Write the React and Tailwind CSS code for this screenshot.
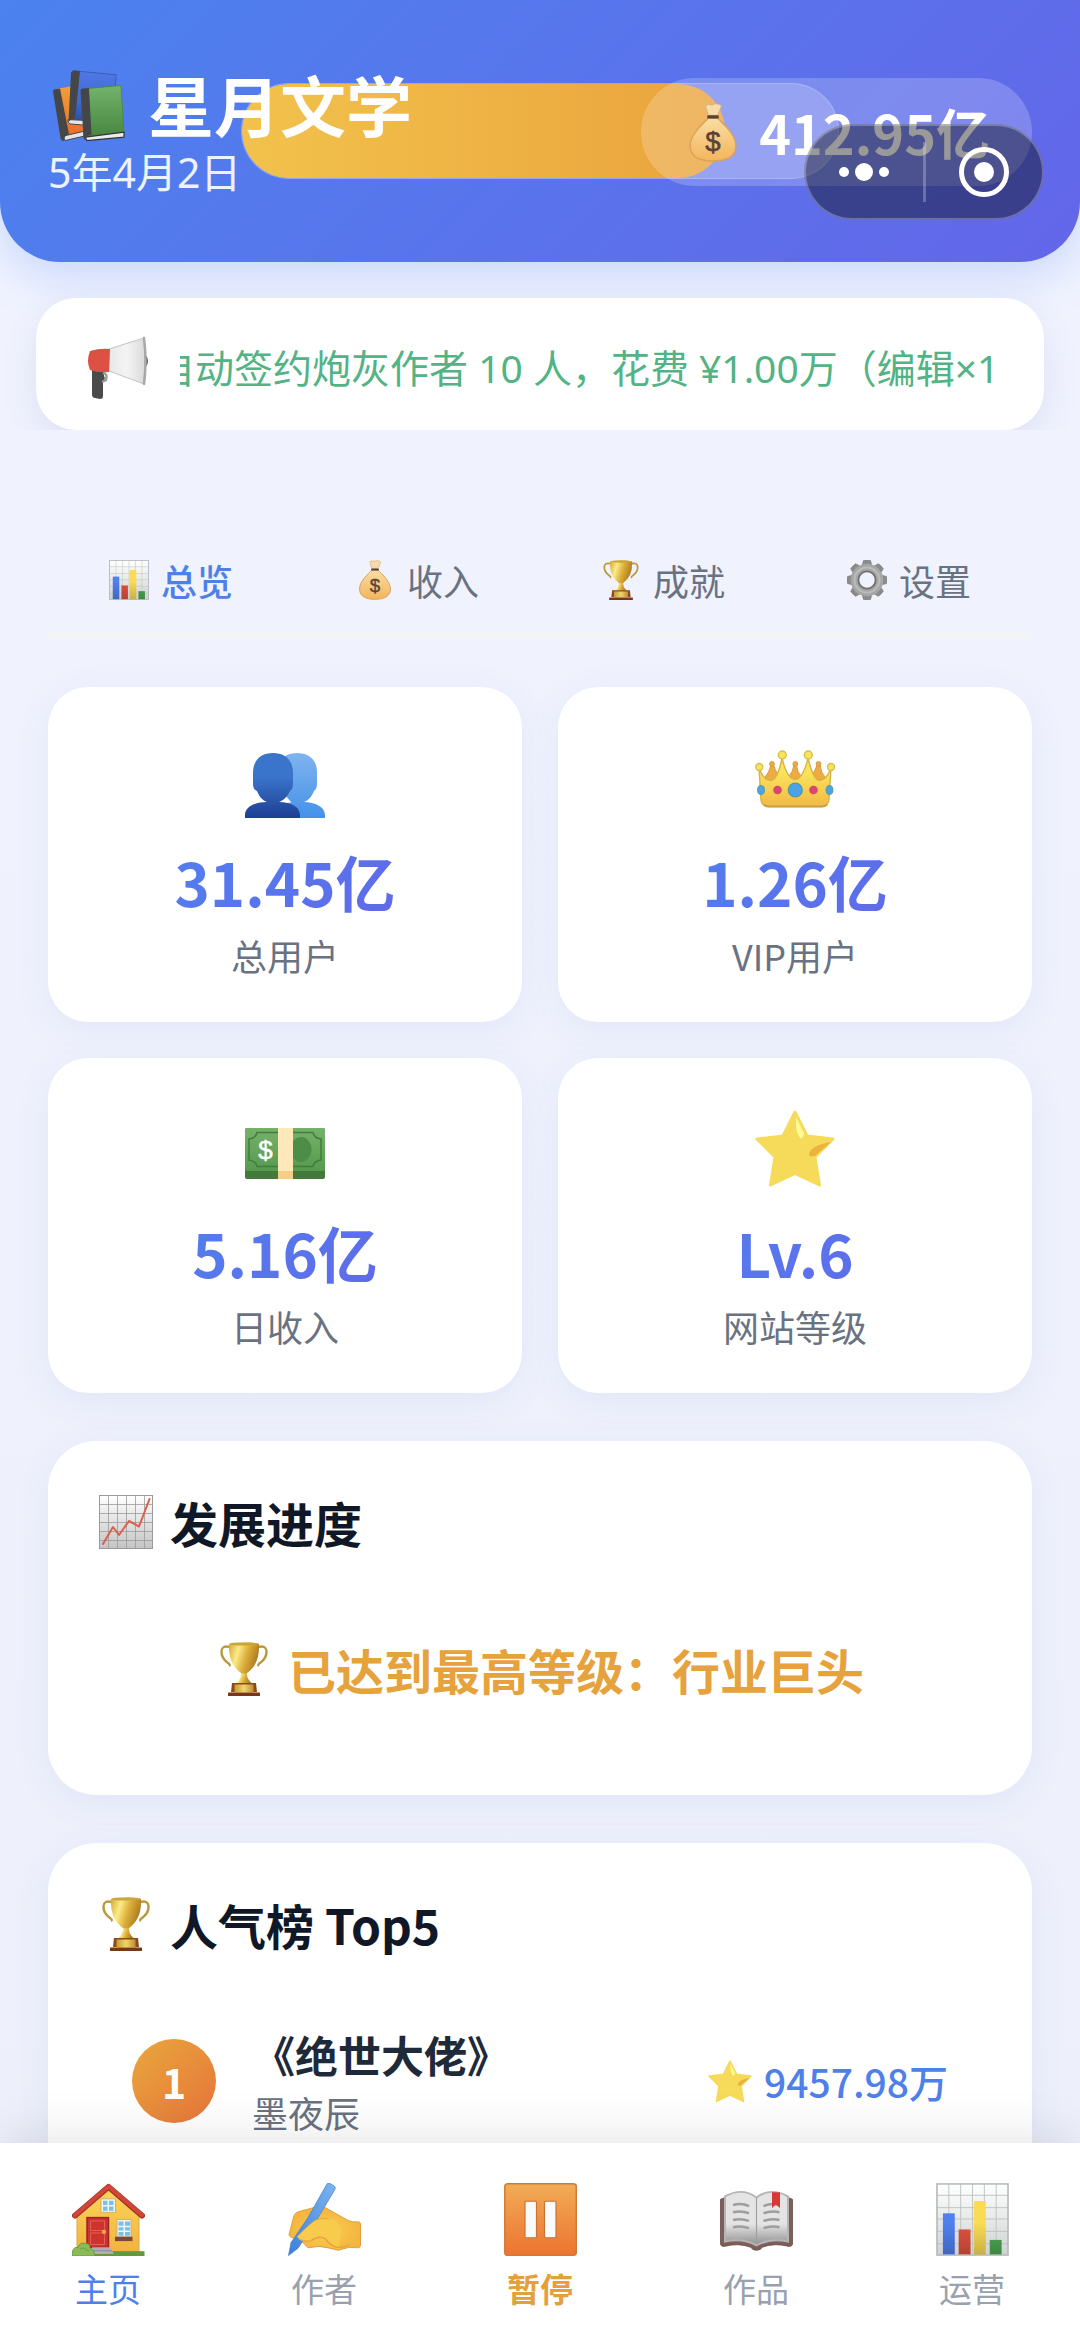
// ============================================
// 星月文学 — Home / Overview Page
// ============================================

import React, { useState } from 'react';

/* ---------- Icons ---------- */

const BooksIcon = ({ className }) => (
  <svg viewBox="0 -3 80 80" preserveAspectRatio="none" className={className} aria-hidden="true">
    <defs>
      <linearGradient id="bk-green" x1="0" y1="0" x2="0" y2="1"><stop offset="0" stopColor="#74b36c" /><stop offset="1" stopColor="#47873f" /></linearGradient>
      <linearGradient id="bk-orange" x1="0" y1="0" x2="0" y2="1"><stop offset="0" stopColor="#f0a03a" /><stop offset="1" stopColor="#ea6c28" /></linearGradient>
      <linearGradient id="bk-navy" x1="0" y1="0" x2="0" y2="1"><stop offset="0" stopColor="#4f78ea" /><stop offset="0.600" stopColor="#4068c8" /><stop offset="1" stopColor="#264f9e" /></linearGradient>
    </defs>
    <path d="M7 23 L27 19 L36 68 L17 72 Z" fill="url(#bk-orange)" />
    <path d="M15 71 L36 66 L36 71 L17 75.500 Z" fill="#e4e4e4" stroke="#444" strokeWidth="1" />
    <path d="M5 25 Q5 23 7 23 L12 22 L21 69 Q16 70 16 76 Q13 76 12.500 73 Z" fill="#444648" />
    <path d="M31 4.500 L68 8 L66 58 L26 56 Z" fill="url(#bk-navy)" stroke="#3f5cae" strokeWidth="1" />
    <path d="M20 54 L40 55 L40 60 L22 58.500 Q19.500 57 20 54 Z" fill="#e6e6e6" stroke="#444" strokeWidth="1" />
    <path d="M23 6 Q24 3.500 27 3.500 L32 4.500 L27 54 Q22 53 20.500 57 Z" fill="#444648" />
    <path d="M40 22 L73 19 L76 67 L43 71 Z" fill="url(#bk-green)" stroke="#4a8a44" strokeWidth="1" />
    <path d="M37 72 L76 67 L76 72 L39 75.500 Z" fill="#ececec" stroke="#333" strokeWidth="1.200" />
    <path d="M32.500 24 Q33 22 35 22 L41 21.500 L43.500 70 Q38 70 37.500 75 Q36 75 35.500 72 Z" fill="#444648" />
  </svg>
);

const MoneyBagIcon = ({ className }) => (
  <svg viewBox="0 0 50 62" className={className} aria-hidden="true">
    <defs>
      <linearGradient id="mb-body" x1="0" y1="0" x2="0" y2="1"><stop offset="0" stopColor="#f9dda2" /><stop offset="1" stopColor="#f3b55c" /></linearGradient>
    </defs>
    <path d="M17 3 Q20 0 24 2 Q29 -1 34 3 L30 13 L20 13 Z" fill="#f8dca8" stroke="#d5b07c" strokeWidth="1" />
    <path d="M20 16 L30 16 C36 22 49 33 49 45 C49 57 38 61 25 61 C12 61 1 57 1 45 C1 33 14 22 20 16 Z" fill="url(#mb-body)" stroke="#dba35a" strokeWidth="1.500" />
    <rect x="19" y="13" width="12" height="3.400" rx="1" fill="#5b4238" />
    <text x="25" y="50" textAnchor="middle" className="font-['Liberation_Sans',sans-serif] text-[29px]" fill="#5b4238" stroke="#5b4238" strokeWidth="0.600">$</text>
  </svg>
);

const MegaphoneIcon = ({ className }) => (
  <svg viewBox="0 0 64 64" className={className} aria-hidden="true">
    <defs>
      <linearGradient id="mp-bell" x1="0" y1="0" x2="1" y2="0"><stop offset="0" stopColor="#e8e8e8" /><stop offset="0.500" stopColor="#f4f4f4" /><stop offset="1" stopColor="#dadada" /></linearGradient>
    </defs>
    <path d="M8 33 L20 34 L20 40 Q22 43 19 46 L19 60 Q19 63 16 63 L11 62 Q8 62 8 58 Z" fill="#4a4a4a" />
    <path d="M19 37 Q24 38 22 44 L18 46" fill="none" stroke="#9b9b9b" strokeWidth="2.500" />
    <path d="M58 18 Q64 19 64 25 Q64 31 58 32 Z" fill="#5b5b5b" />
    <path d="M25 13 L60 2 Q62 25 60 48 L25 35 Z" fill="url(#mp-bell)" stroke="#c4c4c4" strokeWidth="1" />
    <path d="M60 2 Q63 25 60 48" fill="none" stroke="#a8a8a8" strokeWidth="2.500" strokeLinecap="round" />
    <path d="M6 15 Q16 12 26 13 L25 36 Q14 37 6 34 Q2 25 6 15 Z" fill="#dd5145" />
  </svg>
);

const BarChartIcon = ({ className }) => (
  <svg viewBox="0 0 74 77" preserveAspectRatio="none" className={className} aria-hidden="true">
    <defs>
      <linearGradient id="bc-bg" x1="0" y1="0" x2="0" y2="1"><stop offset="0" stopColor="#ffffff" /><stop offset="1" stopColor="#cfd2d2" /></linearGradient>
      <linearGradient id="bc-shade" x1="0" y1="0" x2="0" y2="1"><stop offset="0.400" stopColor="#000" stopOpacity="0" /><stop offset="1" stopColor="#000" stopOpacity="0.200" /></linearGradient>
    </defs>
    <rect x="1" y="1" width="72" height="75" fill="url(#bc-bg)" />
    <path d="M13 1V76M25 1V76M37 1V76M49 1V76M61 1V76M1 13H73M1 26H73M1 38H73M1 51H73M1 64H73" stroke="#bfc3c4" strokeWidth="1" />
    <rect x="7" y="32" width="12" height="44" fill="#4f80f0" />
    <rect x="23" y="49" width="12" height="27" fill="#e0533e" />
    <rect x="38.500" y="19" width="12" height="57" fill="#fadb55" />
    <rect x="54.500" y="60" width="12" height="16" fill="#4ea955" />
    <path d="M7 32h12v44H7zM23 49h12v27H23zM38.500 19h12v57h-12zM54.500 60h12v16h-12z" fill="url(#bc-shade)" />
    <rect x="1" y="1" width="72" height="75" fill="none" stroke="#b4b8b8" strokeWidth="1.600" />
  </svg>
);

const LineChartIcon = ({ className }) => (
  <svg viewBox="0 0 54 54" className={className} aria-hidden="true">
    <defs>
      <linearGradient id="lc-bg" x1="0" y1="0" x2="0" y2="1"><stop offset="0" stopColor="#ffffff" /><stop offset="1" stopColor="#c4c4c4" /></linearGradient>
    </defs>
    <rect x="0.500" y="0.500" width="53" height="53" fill="url(#lc-bg)" stroke="#9a9a9a" />
    <path d="M9.500 0V54M18.500 0V54M27.500 0V54M36.500 0V54M45.500 0V54M0 9.500H54M0 18.500H54M0 27.500H54M0 36.500H54M0 45.500H54" stroke="#9a9a9a" strokeWidth="0.800" />
    <polyline points="4,49 14,32 20,40 30,26 40,31.500 50.500,4" fill="none" stroke="#d9604c" strokeWidth="2" strokeLinecap="round" strokeLinejoin="round" />
  </svg>
);

const TrophyIcon = ({ className }) => (
  <svg viewBox="0 0 48 54" className={className} aria-hidden="true">
    <defs>
      <linearGradient id="tr-cup" x1="0" y1="0" x2="1" y2="0.300"><stop offset="0" stopColor="#d3a632" /><stop offset="0.350" stopColor="#fbeb87" /><stop offset="0.650" stopColor="#dcae3a" /><stop offset="1" stopColor="#b07d22" /></linearGradient>
      <linearGradient id="tr-plate" x1="0" y1="0" x2="1" y2="0"><stop offset="0" stopColor="#c79a33" /><stop offset="0.500" stopColor="#f0d66c" /><stop offset="1" stopColor="#c08e2c" /></linearGradient>
    </defs>
    <path d="M10 5 Q2 3 1.500 9 Q1 16 8 21 Q11 23 9 24" fill="none" stroke="#b8993c" strokeWidth="2.400" />
    <path d="M38 5 Q46 3 46.500 9 Q47 16 40 21 Q37 23 39 24" fill="none" stroke="#b8993c" strokeWidth="2.400" />
    <path d="M21 30 L27 30 Q26 36 32 41.500 L16 41.500 Q22 36 21 30 Z" fill="url(#tr-cup)" />
    <path d="M9 2 Q24 -1.500 39 2 Q40 22 27 31 Q24 32 21 31 Q8 22 9 2 Z" fill="url(#tr-cup)" />
    <ellipse cx="24" cy="2" rx="14.500" ry="1.600" fill="#c9a53b" />
    <path d="M12 41 H36 L37 50 H11 Z" fill="#8a4a1c" />
    <rect x="14.500" y="42.500" width="19" height="8" fill="url(#tr-plate)" />
    <rect x="8" y="50.500" width="32" height="3.500" rx="0.500" fill="#7c3616" />
  </svg>
);

const GearIcon = ({ className }) => (
  <svg viewBox="0 0 40 40" className={className} aria-hidden="true">
    <g fill="#8b8b8b" stroke="#757575" strokeWidth="0.600">
      {[0, 45, 90, 135, 180, 225, 270, 315].map(a => (
        <path key={a} d="M14.500 8 L16.500 0.500 Q20 -0.300 23.500 0.500 L25.500 8 Z" transform={`rotate(${a} 20 20)`} />
      ))}
    </g>
    <circle cx="20" cy="20" r="12.300" fill="none" stroke="#a6a6a6" strokeWidth="8" />
    <circle cx="20" cy="20" r="12.500" fill="none" stroke="#bcbcbc" strokeWidth="2" />
    <circle cx="20" cy="20" r="8.600" fill="none" stroke="#6f6f6f" strokeWidth="1.800" />
  </svg>
);

const UsersIcon = ({ className }) => (
  <svg viewBox="0 -16 80 80" className={`overflow-visible ${className}`} aria-hidden="true">
    <defs>
      <linearGradient id="us-back" x1="0" y1="0" x2="0" y2="1"><stop offset="0" stopColor="#80b4ee" /><stop offset="1" stopColor="#4491ea" /></linearGradient>
      <linearGradient id="us-front" gradientUnits="userSpaceOnUse" x1="0" y1="0" x2="0" y2="66"><stop offset="0.350" stopColor="#3a75cb" /><stop offset="1" stopColor="#1c3d92" /></linearGradient>
    </defs>
    <path d="M52 0 C64 0 72 7 72 19 L72 30 C72 36 70 37 69 38 C67 43 64 47 59 49 C70 49 80 54 80 62 L80 65 L40 65 L40 49 L46 49 L34 35 L36 6 Q42 0 52 0 Z" fill="url(#us-back)" />
    <path d="M39 46 Q43 50 48 49 Q42 51 33 49 Z" fill="#fff" />
    <path d="M28 0 C40 0 48 7 48 20 L48 30 C48 36 46 37 45 38 C42 44 39 47 34 49 C46 49 55 54 55 62 L55 65 L0 65 L0 62 C0 54 10 49 22 49 C17 47 14 43 12 38 C10 37 8 36 8 30 L8 20 C8 7 16 0 28 0 Z" fill="url(#us-front)" />
  </svg>
);

const CrownIcon = ({ className }) => (
  <svg viewBox="0 -13 80 80" className={className} aria-hidden="true">
    <defs>
      <linearGradient id="cr-gold" x1="0" y1="0" x2="0" y2="1"><stop offset="0.300" stopColor="#fae35c" /><stop offset="1" stopColor="#f2b945" /></linearGradient>
    </defs>
    <g fill="#f0ab40" stroke="#d69a40" strokeWidth="1">
      <path d="M16 15 Q14 23 10 27 L22 36 L24 25 Q20 21 18.500 15 Z" />
      <path d="M39 15 Q38 22 34 26 L40 36 L46 26 Q42 22 41.500 15 Z" />
      <path d="M62 15 Q60 22 56 26 L58 36 L70 27 Q66 23 65 15 Z" />
      <circle cx="17" cy="14" r="2.400" /><circle cx="40.300" cy="14" r="2.400" /><circle cx="63.500" cy="14" r="2.400" />
    </g>
    <path d="M4 18 L6 50 Q7 56.500 14 56.500 L67 56.500 Q73 56.500 74 50 L76 18 Q72 30 64 30.500 Q58 29 53 8 Q48 29 40 29.500 Q32 29 27 8 Q23 29 16 30.500 Q8 30 4 18 Z" fill="url(#cr-gold)" stroke="#d6b445" strokeWidth="1.400" />
    <g fill="#f8e25e" stroke="#d6c04c" strokeWidth="1.400">
      <circle cx="27.300" cy="5" r="4" /><circle cx="53.300" cy="5" r="4" /><circle cx="4.300" cy="17" r="3.500" /><circle cx="76" cy="17" r="3.500" />
    </g>
    <path d="M9 54.500 Q11 56.500 14 56.500 L67 56.500 Q70 56.500 72 54.500" fill="none" stroke="#cf9f3e" strokeWidth="1.800" />
    <circle cx="22.500" cy="40" r="4.300" fill="#d9486a" /><circle cx="58.500" cy="40" r="4.300" fill="#d9486a" />
    <circle cx="40.300" cy="40" r="7" fill="#4ba3e6" stroke="#4a97a8" strokeWidth="1.200" />
    <ellipse cx="6" cy="40" rx="3.500" ry="4.600" fill="#4ba3e0" stroke="#4a97a8" strokeWidth="0.800" />
    <ellipse cx="74.500" cy="40" rx="3.500" ry="4.600" fill="#4ba3e0" stroke="#4a97a8" strokeWidth="0.800" />
  </svg>
);

const CashIcon = ({ className }) => (
  <svg viewBox="0 -20 80 80" className={className} aria-hidden="true">
    <defs>
      <linearGradient id="ca-note" x1="0" y1="0" x2="0" y2="1"><stop offset="0" stopColor="#76b16a" /><stop offset="1" stopColor="#569a4f" /></linearGradient>
    </defs>
    <rect width="80" height="51" rx="2" fill="#43793a" />
    <rect width="80" height="43" rx="2" fill="url(#ca-note)" />
    <path d="M12 4.500 H68 Q69 10 76 11 V32 Q69 33 68 38.500 H12 Q11 33 4 32 V11 Q11 10 12 4.500 Z" fill="none" stroke="#417d3c" strokeWidth="1.500" />
    <ellipse cx="56" cy="21.500" rx="10.500" ry="12.500" fill="#4c8d47" />
    <text x="20.500" y="31" textAnchor="middle" className="font-['Liberation_Sans',sans-serif] text-[26px]" fill="#fff" stroke="#fff" strokeWidth="0.500">$</text>
    <rect x="33" width="15" height="43" fill="#fce8b8" />
    <rect x="33" y="43" width="15" height="8" fill="#f6ce86" />
  </svg>
);

const StarIcon = ({ className }) => (
  <svg viewBox="0 -2 80 80" className={className} aria-hidden="true">
    <path d="M40 2 L52 26 L78 29 L60 47 L64.500 75 L40 63.500 L15.500 75 L20 47 L2 29 L28 26 Z" fill="#f6da5a" stroke="#f6da5a" strokeWidth="3" strokeLinejoin="round" />
    <path d="M41 7 L49 23 Q49 29 45 28 Q40 22 41 7 Z" fill="#fefb94" />
    <path d="M76 32 L60 46 Q54 48 54 43 Q58 35 76 32 Z" fill="#e9b43e" />
  </svg>
);

const HouseIcon = ({ className }) => (
  <svg viewBox="0 0 73 76" preserveAspectRatio="none" className={className} aria-hidden="true">
    <defs>
      <linearGradient id="ho-wall" x1="0" y1="0" x2="0" y2="1"><stop offset="0" stopColor="#fbd65a" /><stop offset="1" stopColor="#f3b23e" /></linearGradient>
    </defs>
    <path d="M5 30 L36 4 L67 30 V72 H5 Z" fill="url(#ho-wall)" stroke="#d6a94c" strokeWidth="1" />
    <path d="M3 34 L36.500 4 L70 34" fill="none" stroke="#a93428" strokeWidth="6" strokeLinecap="round" strokeLinejoin="round" />
    <path d="M3 33.500 L36.500 3.500 L70 33.500" fill="none" stroke="#d2463a" strokeWidth="4" strokeLinecap="round" strokeLinejoin="round" />
    <rect x="29" y="16.500" width="14.500" height="14" fill="#f4f6ee" stroke="#c9b070" strokeWidth="1" />
    <path d="M31 18.500h4.500v4.500H31zM37 18.500h4.500v4.500H37zM31 24.500h4.500V29H31zM37 24.500h4.500V29H37z" fill="#78c0ea" />
    <rect x="15" y="36" width="21.500" height="31" fill="#d0332e" stroke="#9c2420" strokeWidth="1.500" />
    <path d="M18.500 39.500h14v10h-14zM18.500 52h14v12h-14z" fill="none" stroke="#dd6258" strokeWidth="1" />
    <circle cx="32" cy="51" r="2.200" fill="#f7a93a" />
    <rect x="45" y="38" width="14" height="18" fill="#f4f6ee" stroke="#c9b070" strokeWidth="1" />
    <path d="M46.500 40h5v4.500h-5zM53 40h5v4.500h-5zM46.500 46h5v3.500h-5zM53 46h5v3.500h-5zM46.500 51h5v4h-5zM53 51h5v4h-5z" fill="#78c0ea" />
    <rect x="43" y="56" width="17.500" height="4.500" fill="#7a4a3a" />
    <rect x="22" y="71" width="50.500" height="5" fill="#64983c" />
    <path d="M20 67 H38 L42 74 H20 Z" fill="#b2aeae" /><path d="M20 70.500H40" stroke="#8f8b8b" />
    <path d="M0 76 Q0 66 6 67 Q8 61 14 63 Q18 63 18 68 Q23 70 22.500 76 Z" fill="#8abb56" stroke="#6c9c42" strokeWidth="1" />
    <path d="M8 69 Q12 66 14 70 L17 70" fill="none" stroke="#6c9c42" strokeWidth="1" />
  </svg>
);

const WritingIcon = ({ className }) => (
  <svg viewBox="0 0 73 76" preserveAspectRatio="none" className={className} aria-hidden="true">
    <defs>
      <radialGradient id="wr-hand" cx="0.500" cy="0.550" r="0.500"><stop offset="0" stopColor="#f8cf50" /><stop offset="1" stopColor="#f4b640" /></radialGradient>
      <linearGradient id="wr-pen" x1="1" y1="0" x2="0" y2="1"><stop offset="0" stopColor="#7db3ee" /><stop offset="1" stopColor="#3a80dc" /></linearGradient>
    </defs>
    <path d="M6 34 Q7 31 10 30 L26 25.500 Q32 24 38 26 L60 39 Q64 41 71 40.500 Q72.500 41 72.500 43 V65 Q72 67.500 70 67.500 L61 67 L50 70 Q40 67 31 66 L20 67.500 Q13 60 10 57 Q2 58 1 54 Z" fill="url(#wr-hand)" stroke="#e0a03c" strokeWidth="1" />
    <path d="M39 1 Q40 0 42 0.500 L46 3 Q48 4 47 6.500 L29 38 L10 68 L0.500 75.500 L3 62 L20 36 Z" fill="url(#wr-pen)" stroke="#4c84cc" strokeWidth="0.800" />
    <path d="M9 56 Q20 44 27 39 Q34 35 46 38 Q56 46 52 58 L50 69 Q42 66 37 60 Q32 55 24 60 Q14 63 9 56 Z" fill="#f8cb4c" />
    <path d="M9 56 Q20 44 27 39 Q32 36 41 37.500" fill="none" stroke="#dfa63e" strokeWidth="1" />
    <path d="M11 58 Q16 62 23 60 Q31 54 37 58 Q43 66 50 67 Q57 67 61 64" fill="none" stroke="#e3a43c" strokeWidth="1.500" />
  </svg>
);

const PauseIcon = ({ className }) => (
  <svg viewBox="0 0 73 76" preserveAspectRatio="none" className={className} aria-hidden="true">
    <defs>
      <linearGradient id="pa-bg" x1="0" y1="0" x2="0" y2="1"><stop offset="0" stopColor="#f2ac56" /><stop offset="1" stopColor="#ec7430" /></linearGradient>
    </defs>
    <rect x="0.800" y="0.800" width="71.500" height="74.500" rx="3" fill="url(#pa-bg)" stroke="#cf7a36" strokeWidth="1.500" />
    <rect x="21" y="19" width="11.500" height="38" rx="1" fill="#fafafa" stroke="#c97436" strokeWidth="1.200" />
    <rect x="40.500" y="19" width="11.500" height="38" rx="1" fill="#fafafa" stroke="#c97436" strokeWidth="1.200" />
  </svg>
);

const OpenBookIcon = ({ className }) => (
  <svg viewBox="0 0 73 76" preserveAspectRatio="none" className={className} aria-hidden="true">
    <defs>
      <linearGradient id="ob-page" x1="0" y1="0" x2="0" y2="1"><stop offset="0.600" stopColor="#e4e4e4" /><stop offset="1" stopColor="#8f8f8f" /></linearGradient>
    </defs>
    <path d="M0.500 17 L5 15 H68 L72.500 17 V64 Q72 66 69 66 Q54 62 42 67 Q41 70 36.500 70 Q32 70 31 67 Q19 62 4 66 Q1 66 0.500 64 Z" fill="#7d5f58" stroke="#664a44" strokeWidth="0.800" />
    <path d="M5 14 Q22 4 36.500 15 Q51 4 68 14 V61 Q50 57 36.500 65 Q23 57 5 61 Z" fill="url(#ob-page)" stroke="#b5b5b5" strokeWidth="2" />
    <path d="M36.500 15 V64" stroke="#a0a0a0" strokeWidth="1.200" />
    <path d="M13 23q8-2.500 16 1M13 30.500q8-2 16 1M13 38.500q8-2 16 1M13 46q8-2 16 1M43.500 24q8-3.500 16-1M43.500 31.500q8-3 16-1M43.500 39.500q8-3 16-1M43.500 47q8-3 16-1" fill="none" stroke="#9d9d9d" strokeWidth="2.600" />
    <path d="M52 9.500 H60 V26 L56 22.500 L52 26 Z" fill="#d93838" />
  </svg>
);

/* ---------- Data ---------- */

const TABS = [
  { key: 'overview', label: '总览', Icon: BarChartIcon },
  { key: 'income', label: '收入', Icon: MoneyBagIcon },
  { key: 'badges', label: '成就', Icon: TrophyIcon },
  { key: 'settings', label: '设置', Icon: GearIcon },
];

const STATS = [
  { label: '总用户', value: '31.45亿', Icon: UsersIcon },
  { label: 'VIP用户', value: '1.26亿', Icon: CrownIcon },
  { label: '日收入', value: '5.16亿', Icon: CashIcon },
  { label: '网站等级', value: 'Lv.6', Icon: StarIcon },
];

const RANKING = [{ title: '《绝世大佬》', author: '墨夜辰', score: '9457.98万' }];

const NAV = [
  { key: 'home', label: '主页', Icon: HouseIcon, color: 'text-[#4f80ea]' },
  { key: 'authors', label: '作者', Icon: WritingIcon, color: 'text-gray-400' },
  { key: 'pause', label: '暂停', Icon: PauseIcon, color: 'font-bold text-[#e2a03f]' },
  { key: 'works', label: '作品', Icon: OpenBookIcon, color: 'text-gray-400' },
  { key: 'ops', label: '运营', Icon: BarChartIcon, color: 'text-gray-400' },
];

/* ---------- Page ---------- */

export default function App() {
  const [tab, setTab] = useState('overview');

  return (
    <div className="flex h-screen flex-col overflow-hidden bg-linear-to-b from-[#f1f4ff] to-[#edf0fb] font-['Noto_Sans_CJK_SC',sans-serif]">
      <header className="relative flex shrink-0 items-center justify-between rounded-b-[60px] bg-linear-135 from-[#4a82ef] to-[#6366e9] px-12 pt-[63px] pb-[61px] shadow-[0_12px_48px_rgba(74,128,240,0.26)]">
        {/* Level progress */}
        <div className="absolute top-[83px] left-1/2 h-24 w-[598px] -translate-x-1/2 overflow-hidden rounded-full border border-white/20 bg-white/20">
          <div className="h-full w-[81%] rounded-full bg-linear-to-r from-[#f2c24c] to-[#eaa33c]" />
        </div>

        <div className="relative">
          <h1 className="flex items-center gap-5 text-[66px] leading-[80px] font-bold text-white">
            <BooksIcon className="h-[78px] w-20" />
            星月文学
          </h1>
          <p className="font-['Noto_Sans','Noto_Sans_CJK_SC',sans-serif] text-[41px] leading-[58px] text-white/90">5年4月2日</p>
        </div>

        <div className="relative flex h-[108px] items-center gap-4 rounded-full bg-white/20 px-[42px]">
          <MoneyBagIcon className="h-[59px] w-[60px]" />
          <span className="text-[54px] leading-[72px] font-bold text-white">412.95亿</span>
        </div>

        {/* Mini-program capsule */}
        <div className="absolute top-[124px] right-9 flex h-24 w-60 items-center rounded-full border-2 border-white/25 bg-black/40">
          <button aria-label="更多" className="flex flex-1 items-center justify-center gap-[6px]">
            <span className="size-[10px] rounded-full bg-white" />
            <span className="size-[18px] rounded-full bg-white" />
            <span className="size-[10px] rounded-full bg-white" />
          </button>
          <span className="h-[60px] w-[3px] bg-white/25" />
          <button aria-label="关闭" className="flex flex-1 items-center justify-center">
            <span className="flex size-[50px] items-center justify-center rounded-full border-[5px] border-white">
              <span className="size-5 rounded-full bg-white" />
            </span>
          </button>
        </div>
      </header>

      <main className="relative min-h-0 flex-1 overflow-y-auto [scrollbar-width:none]">
        {/* Announcement */}
        <div className="overflow-hidden px-9 pt-9">
          <div className="flex h-[132px] items-center gap-8 rounded-[40px] bg-white pt-2 pr-10 pl-12 shadow-[0_12px_36px_rgba(80,90,160,0.12)]">
            <MegaphoneIcon className="size-16 shrink-0" />
            <div className="flex-1 overflow-hidden">
              <p className="-ml-6 font-['Noto_Sans','Noto_Sans_CJK_SC',sans-serif] text-[39px] leading-[56px] whitespace-nowrap text-[#52b384]">
                自动签约炮灰作者 10 人，花费 ¥1.00万（编辑×1
              </p>
            </div>
          </div>
        </div>

        <div className="px-12">
          {/* Tabs */}
          <nav className="mt-[98px] mb-[49px] grid grid-cols-4 border-b-[6px] border-gray-100">
            {TABS.map(({ key, label, Icon }) => (
              <button
                key={key}
                onClick={() => setTab(key)}
                className={`flex h-[104px] items-center justify-center gap-3 text-4xl ${tab === key ? 'font-medium text-[#4f80ea]' : 'text-gray-500'}`}
              >
                <Icon className="size-10" />
                {label}
              </button>
            ))}
          </nav>

          {/* Stats */}
          <div className="grid grid-cols-2 gap-9">
            {STATS.map(({ label, value, Icon }) => (
              <div key={label} className="flex flex-col items-center rounded-[40px] bg-white px-9 pt-[50px] pb-10 shadow-[0_8px_36px_rgba(80,90,160,0.08)]">
                <Icon className="size-20" />
                <p className="mt-7 w-full text-center text-[60px] leading-[72px] font-bold">
                  <span className="block bg-linear-135 from-[#4a86f2] to-[#6362e6] bg-clip-text text-transparent">{value}</span>
                </p>
                <p className="mt-3 text-4xl leading-[53px] text-gray-500">{label}</p>
              </div>
            ))}
          </div>

          {/* Progress */}
          <section className="mt-12 rounded-[48px] bg-white px-12 pt-12 pb-[90px] shadow-[0_8px_36px_rgba(80,90,160,0.08)]">
            <h2 className="flex items-center gap-[14px] text-5xl leading-[66px] font-bold text-gray-900">
              <LineChartIcon className="size-[60px] p-[3px]" />
              发展进度
            </h2>
            <p className="mt-[78px] flex items-center justify-center gap-4 text-5xl leading-[72px] font-bold text-[#e6a23c]">
              <TrophyIcon className="h-[54px] w-14" />
              已达到最高等级：行业巨头
            </p>
          </section>

          {/* Ranking */}
          <section className="mt-12 rounded-[48px] bg-white px-12 pt-12 pb-12 shadow-[0_8px_36px_rgba(80,90,160,0.08)]">
            <h2 className="flex items-center gap-[14px] text-5xl leading-[66px] font-bold text-gray-900">
              <TrophyIcon className="h-[54px] w-[60px]" />
              人气榜 Top5
            </h2>
            <ol className="mt-[30px]">
              {RANKING.map((book, i) => (
                <li key={book.title} className="flex items-center gap-9 p-9">
                  <span className="flex size-[84px] items-center justify-center rounded-full bg-linear-135 from-[#e8a73c] to-[#e6733a] text-[41px] leading-none font-bold text-white">{i + 1}</span>
                  <div className="flex-1">
                    <p className="text-[43px] leading-[62px] font-bold text-gray-800">{book.title}</p>
                    <p className="text-4xl leading-[54px] text-gray-500">{book.author}</p>
                  </div>
                  <span className="flex items-center gap-3 text-[39px] leading-[54px] font-medium text-[#4f80ea]">
                    <StarIcon className="size-11" />
                    {book.score}
                  </span>
                </li>
              ))}
            </ol>
          </section>
        </div>
      </main>

      {/* Bottom navigation */}
      <nav className="relative grid shrink-0 grid-cols-5 bg-white pt-10 pb-[30px] shadow-[0_-6px_48px_rgba(0,0,0,0.1)]">
        {NAV.map(({ key, label, Icon, color }) => (
          <button key={key} className={`flex flex-col items-center gap-[10px] text-[33px] leading-[44px] ${color}`}>
            <Icon className="size-[73px]" />
            {label}
          </button>
        ))}
      </nav>
    </div>
  );
}
